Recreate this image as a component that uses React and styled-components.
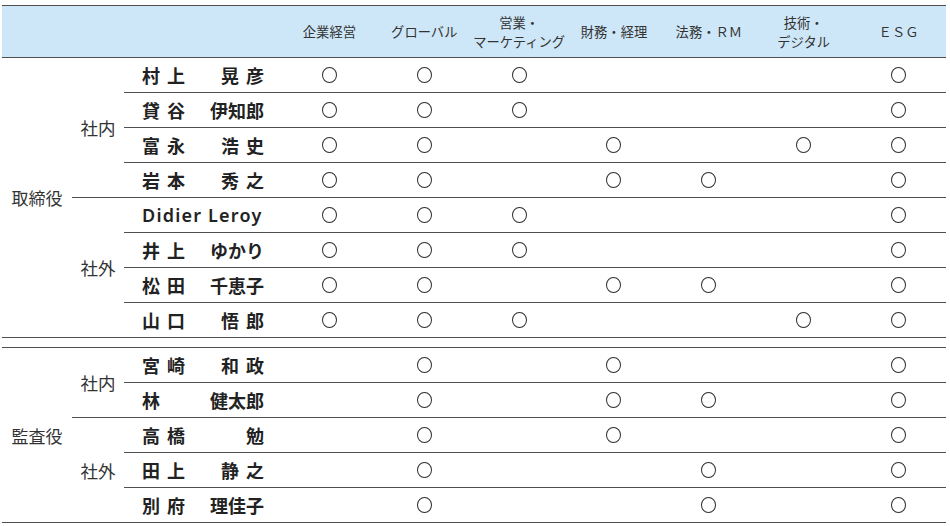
import React from 'react';
import styled, { createGlobalStyle } from 'styled-components';

const GlobalStyle = createGlobalStyle`
  body {
    margin: 0;
    background: #fff;
    font-family: "Noto Sans CJK JP", "Noto Sans", sans-serif;
    color: #333;
  }
`;

const LINE = '#4f4f4f';

const SKILLS = ['企業経営', 'グローバル', '営業・\nマーケティング', '財務・経理', '法務・ＲＭ', '技術・\nデジタル', 'ＥＳＧ'];

const ROLES = [
  {
    role: '取締役',
    groups: [
      {
        label: '社内',
        people: [
          { sei: '村上', mei: '晃彦', marks: [1, 1, 1, 0, 0, 0, 1] },
          { sei: '貸谷', mei: '伊知郎', marks: [1, 1, 1, 0, 0, 0, 1] },
          { sei: '富永', mei: '浩史', marks: [1, 1, 0, 1, 0, 1, 1] },
          { sei: '岩本', mei: '秀之', marks: [1, 1, 0, 1, 1, 0, 1] },
        ],
      },
      {
        label: '社外',
        people: [
          { latin: 'Didier Leroy', marks: [1, 1, 1, 0, 0, 0, 1] },
          { sei: '井上', mei: 'ゆかり', marks: [1, 1, 1, 0, 0, 0, 1] },
          { sei: '松田', mei: '千恵子', marks: [1, 1, 0, 1, 1, 0, 1] },
          { sei: '山口', mei: '悟郎', marks: [1, 1, 1, 0, 0, 1, 1] },
        ],
      },
    ],
  },
  {
    role: '監査役',
    groups: [
      {
        label: '社内',
        people: [
          { sei: '宮崎', mei: '和政', marks: [0, 1, 0, 1, 0, 0, 1] },
          { sei: '林', mei: '健太郎', marks: [0, 1, 0, 1, 1, 0, 1] },
        ],
      },
      {
        label: '社外',
        people: [
          { sei: '高橋', mei: '勉', marks: [0, 1, 0, 1, 0, 0, 1] },
          { sei: '田上', mei: '静之', marks: [0, 1, 0, 0, 1, 0, 1] },
          { sei: '別府', mei: '理佳子', marks: [0, 1, 0, 0, 1, 0, 1] },
        ],
      },
    ],
  },
];

const Table = styled.div`
  margin: 5px 4px 0 2px;
`;

const Header = styled.div`
  display: grid;
  grid-template-columns: 280px repeat(7, 1fr);
  height: 53px;
  box-sizing: border-box;
  background: #cde7f8;
  border-top: 1px solid ${LINE};
  border-bottom: 1px solid ${LINE};
`;

const HeadCell = styled.div`
  display: flex;
  align-items: center;
  justify-content: center;
  text-align: center;
  white-space: pre-line;
  font-size: 13.3px;
  line-height: 19px;
  color: #333;
`;

const Section = styled.div`
  display: flex;
  border-bottom: 1px solid ${LINE};
  ${({ $second }) => $second && `
    margin-top: 9px;
    border-top: 1px solid ${LINE};
  `}
`;

const RoleLabel = styled.div`
  width: 70px;
  flex: none;
  display: flex;
  align-items: center;
  justify-content: center;
  font-size: 17px;
  color: #333;
`;

const Groups = styled.div`
  flex: 1;
  display: flex;
  flex-direction: column;
`;

const Group = styled.div`
  display: flex;
  &:not(:last-child) {
    border-bottom: 1px solid ${LINE};
  }
`;

const SubLabel = styled.div`
  width: 52px;
  flex: none;
  display: flex;
  align-items: center;
  justify-content: center;
  font-size: 17.5px;
  color: #333;
`;

const Rows = styled.div`
  flex: 1;
  display: flex;
  flex-direction: column;
`;

const Row = styled.div`
  display: grid;
  grid-template-columns: 158px repeat(7, 1fr);
  height: 34px;
  &:not(:last-child) {
    border-bottom: 1px solid ${LINE};
  }
`;

const NameCell = styled.div`
  display: flex;
  align-items: center;
  justify-content: space-between;
  padding: 0 18px;
  font-size: 18px;
  font-weight: 700;
  color: #222;
`;

const NamePart = styled.span`
  letter-spacing: ${({ $spaced }) => ($spaced ? '7px' : '0')};
  margin-right: ${({ $spaced }) => ($spaced ? '-7px' : '0')};
  ${({ $right }) => $right && 'margin-left: auto;'}
`;

const LatinName = styled.span`
  font-family: "Noto Sans", "DejaVu Sans", sans-serif;
  font-weight: 600;
  font-size: 18px;
  letter-spacing: 1.2px;
  color: #222;
  white-space: nowrap;
`;

const MarkCell = styled.div`
  display: flex;
  align-items: center;
  justify-content: center;
`;

const Mark = styled.span`
  width: 15px;
  height: 16px;
  box-sizing: border-box;
  border: 1.4px solid #2d2d2d;
  border-radius: 50%;
`;

function PersonRow({ person }) {
  return (
    <Row>
      <NameCell>
        {person.latin ? (
          <LatinName>{person.latin}</LatinName>
        ) : (
          <>
            <NamePart $spaced={person.sei.length === 2}>{person.sei}</NamePart>
            <NamePart $right $spaced={person.mei.length === 2}>{person.mei}</NamePart>
          </>
        )}
      </NameCell>
      {person.marks.map((m, i) => (
        <MarkCell key={i}>{m ? <Mark /> : null}</MarkCell>
      ))}
    </Row>
  );
}

export default function App() {
  return (
    <>
      <GlobalStyle />
      <Table>
        <Header>
          <div />
          {SKILLS.map((s) => (
            <HeadCell key={s}>{s}</HeadCell>
          ))}
        </Header>
        {ROLES.map((r, ri) => (
          <Section key={r.role} $second={ri > 0}>
            <RoleLabel>{r.role}</RoleLabel>
            <Groups>
              {r.groups.map((g) => (
                <Group key={g.label}>
                  <SubLabel>{g.label}</SubLabel>
                  <Rows>
                    {g.people.map((p) => (
                      <PersonRow key={p.latin || p.sei + p.mei} person={p} />
                    ))}
                  </Rows>
                </Group>
              ))}
            </Groups>
          </Section>
        ))}
      </Table>
    </>
  );
}
